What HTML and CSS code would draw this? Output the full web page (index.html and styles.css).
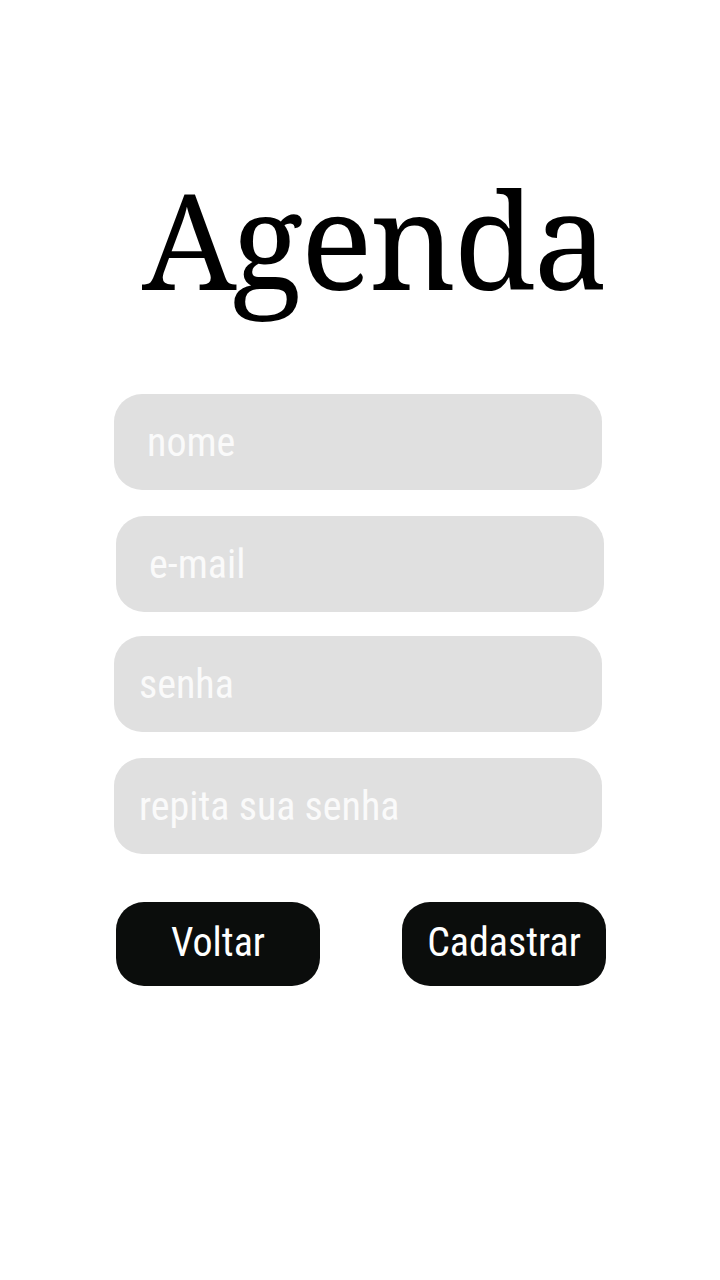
FILE: index.html
```html
<!DOCTYPE html>
<html lang="pt">
<head>
<meta charset="utf-8">
<title>Agenda</title>
<link rel="stylesheet" href="styles.css">
</head>
<body>
<main class="page">
  <h1 class="title">Agenda</h1>
  <form class="form">
    <input class="field field--wide" type="text" placeholder="nome">
    <input class="field field--wide field--shift" type="email" placeholder="e-mail">
    <input class="field field--close" type="password" placeholder="senha">
    <input class="field" type="password" placeholder="repita sua senha">
    <div class="actions">
      <button class="btn" type="button">Voltar</button>
      <button class="btn" type="submit">Cadastrar</button>
    </div>
  </form>
</main>
</body>
</html>
```
FILE: styles.css
```css
html, body {
  margin: 0;
  padding: 0;
  background: #ffffff;
}
.page {
  width: 720px;
  height: 1280px;
  display: flex;
  flex-direction: column;
}
.title {
  margin: 153px 0 0 0;
  padding-left: 142px;
  font-family: "Noto Serif", "Liberation Serif", serif;
  font-weight: 400;
  font-size: 134px;
  line-height: 170px;
  letter-spacing: -2.6px;
  color: #000;
}
.form {
  margin: 71px 0 0 114px;
  width: 492px;
  display: flex;
  flex-direction: column;
  gap: 26px;
}
.field {
  box-sizing: border-box;
  width: 488px;
  height: 96px;
  border: none;
  outline: none;
  border-radius: 28px;
  background: #e0e0e0;
  padding: 0 0 0 25px;
  margin: 0;
  font-family: "Roboto Condensed", "Liberation Sans Narrow", Roboto, sans-serif;
  font-stretch: condensed;
  font-size: 40px;
  color: #333;
}
.field::placeholder {
  color: #fafafa;
  opacity: 1;
}
.field--wide { padding-left: 33px; }
.field--shift { margin-left: 2px; }
.field--close { margin-top: -2px; }
.actions {
  margin-top: 22px;
  padding-left: 2px;
  display: flex;
  justify-content: space-between;
}
.btn {
  width: 204px;
  height: 84px;
  border: none;
  border-radius: 28px;
  background: #0b0d0c;
  color: #ffffff;
  font-family: "Roboto Condensed", "Liberation Sans Narrow", Roboto, sans-serif;
  font-stretch: condensed;
  font-size: 40px;
  padding: 0 0 4px 0;
}
```
